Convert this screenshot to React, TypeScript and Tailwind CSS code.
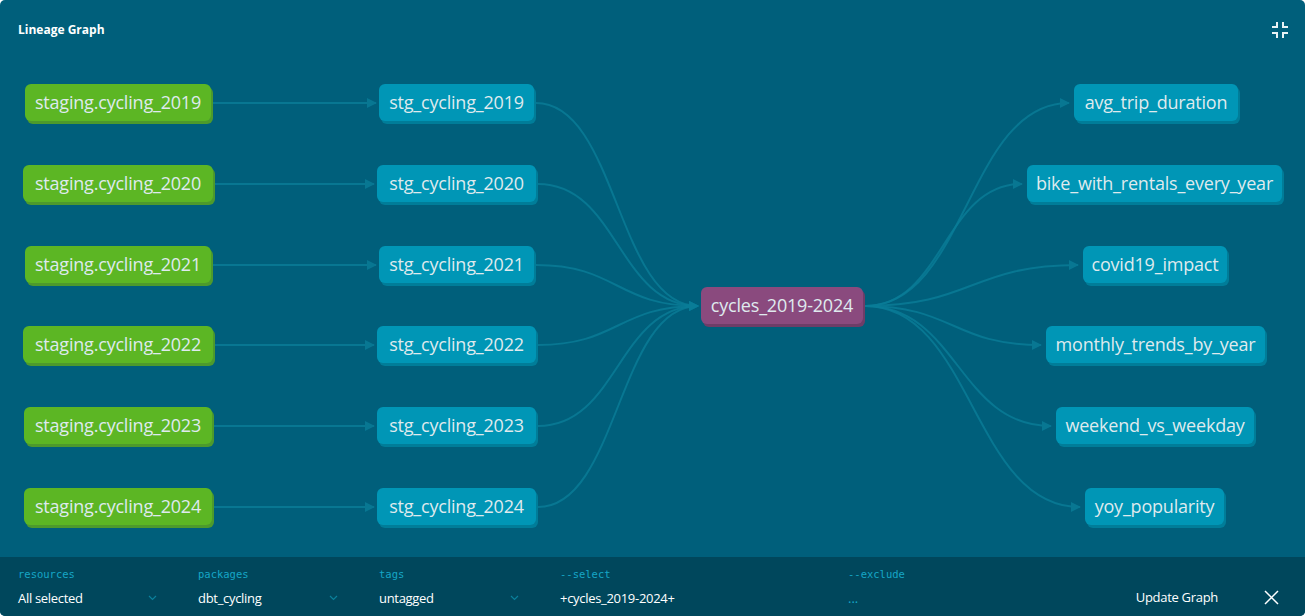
import { Fragment } from "react";

// Lineage graph panel: node positions are the content of the canvas, so the
// nodes sit absolutely inside it; the filter bar below is plain flow layout.

type Kind = "source" | "model" | "focus";
type GraphNode = { id: string; label: string; kind: Kind; x1: number; x2: number; cy: number };

const ROWS = [103, 184, 265, 345, 426, 507];
const CENTER = { x1: 701, x2: 863, cy: 306 };

const sources: GraphNode[] = [
  { x1: 25, x2: 211 },
  { x1: 23, x2: 213 },
  { x1: 25, x2: 211 },
  { x1: 23, x2: 213 },
  { x1: 24, x2: 212 },
  { x1: 24, x2: 212 },
].map((b, i) => ({
  id: `src${i}`,
  label: `staging.cycling_${2019 + i}`,
  kind: "source",
  x1: b.x1,
  x2: b.x2,
  cy: ROWS[i],
}));

const staging: GraphNode[] = [
  { x1: 379, x2: 534 },
  { x1: 377, x2: 536 },
  { x1: 379, x2: 534 },
  { x1: 377, x2: 536 },
  { x1: 377, x2: 536 },
  { x1: 377, x2: 536 },
].map((b, i) => ({
  id: `stg${i}`,
  label: `stg_cycling_${2019 + i}`,
  kind: "model",
  x1: b.x1,
  x2: b.x2,
  cy: ROWS[i],
}));

const focus: GraphNode = { id: "focus", label: "cycles_2019-2024", kind: "focus", ...CENTER };

const marts: GraphNode[] = [
  { label: "avg_trip_duration", x1: 1074, x2: 1238 },
  { label: "bike_with_rentals_every_year", x1: 1027, x2: 1282 },
  { label: "covid19_impact", x1: 1083, x2: 1227 },
  { label: "monthly_trends_by_year", x1: 1046, x2: 1265 },
  { label: "weekend_vs_weekday", x1: 1056, x2: 1254 },
  { label: "yoy_popularity", x1: 1085, x2: 1224 },
].map((m, i) => ({ id: `mart${i}`, kind: "model", cy: ROWS[i], ...m }));

const kindClass: Record<Kind, string> = {
  source: "bg-[#5cb624] shadow-[2px_3px_0_#4d9a2c]",
  model: "bg-[#0096b6] shadow-[2px_3px_0_#007d99]",
  focus: "bg-[#8a4a7e] shadow-[2px_3px_0_#6e3d68]",
};

function curve(x1: number, y1: number, x2: number, y2: number) {
  const mx = (x1 + x2) / 2;
  return `M${x1} ${y1} C${mx} ${y1}, ${mx} ${y2}, ${x2} ${y2}`;
}

function Edges() {
  const paths: string[] = [];
  sources.forEach((s, i) => paths.push(`M${s.x2 + 2} ${s.cy} L${staging[i].x1 - 3} ${staging[i].cy}`));
  staging.forEach((s) => paths.push(curve(s.x2 + 2, s.cy, focus.x1 - 3, focus.cy)));
  marts.forEach((m) => paths.push(curve(focus.x2 + 2, focus.cy, m.x1 - 5, m.cy)));
  return (
    <svg className="absolute inset-0 h-full w-full" width="1305" height="557">
      <defs>
        <marker id="arrow" viewBox="0 0 10 10" refX="9" refY="5" markerWidth="5" markerHeight="5" orient="auto">
          <path d="M0 0 L10 5 L0 10 z" fill="#0a7d98" />
        </marker>
      </defs>
      {paths.map((d, i) => (
        <path key={i} d={d} fill="none" stroke="#0a7d98" strokeWidth="2" opacity="0.8" markerEnd="url(#arrow)" />
      ))}
    </svg>
  );
}

function Node({ n }: { n: GraphNode }) {
  return (
    <div
      className={`absolute flex h-[37px] items-center justify-center rounded-[6px] font-['Open_Sans',sans-serif] text-[18px] tracking-[-0.2px] whitespace-nowrap text-[#dfeaee] ${kindClass[n.kind]}`}
      style={{ left: n.x1, width: n.x2 - n.x1, top: n.cy - 19 }}
    >
      {n.label}
    </div>
  );
}

function CollapseIcon() {
  return (
    <svg width="18" height="18" viewBox="0 0 18 18" fill="none" stroke="#e8f2f5" strokeWidth="2">
      <path d="M1 6 H6 V1" />
      <path d="M17 6 H12 V1" />
      <path d="M1 12 H6 V17" />
      <path d="M17 12 H12 V17" />
    </svg>
  );
}

function Chevron() {
  return (
    <svg width="9" height="6" viewBox="0 0 9 6" fill="none" stroke="#0b809b" strokeWidth="1.2">
      <path d="M1 1 L4.5 4.5 L8 1" />
    </svg>
  );
}

const filters = [
  { label: "resources", value: "All selected", width: "w-[180px]", chevron: true },
  { label: "packages", value: "dbt_cycling", width: "w-[181px]", chevron: true },
  { label: "tags", value: "untagged", width: "w-[181px]", chevron: true },
  { label: "--select", value: "+cycles_2019-2024+", width: "w-[288px]", chevron: false },
];

export default function App() {
  return (
    <div className="h-[616px] w-full bg-white">
      <div className="flex h-full flex-col overflow-hidden rounded-[5px] bg-[#005f7b]">
        <div className="relative flex-1">
          <div className="absolute left-[18px] top-[21px] font-['Open_Sans',sans-serif] text-[12px] font-bold text-white">
            Lineage Graph
          </div>
          <button className="absolute right-[16px] top-[21px]">
            <CollapseIcon />
          </button>
          <Edges />
          {[...sources, ...staging, focus, ...marts].map((n) => (
            <Fragment key={n.id}>
              <Node n={n} />
            </Fragment>
          ))}
        </div>

        <div className="flex h-[59px] items-stretch bg-[#00475c] pl-[18px] pr-[26px] font-['Open_Sans',sans-serif]">
          {filters.map((f) => (
            <div key={f.label} className={`${f.width} flex shrink-0 flex-col pt-[10px] pr-[41px]`}>
              <span className="font-['DejaVu_Sans_Mono',monospace] text-[10.5px] leading-[14px] text-[#16a6c6]">
                {f.label}
              </span>
              <div className="mt-[8px] flex items-center justify-between">
                <span className="text-[13px] leading-[18px] tracking-[-0.3px] text-white">{f.value}</span>
                {f.chevron && <Chevron />}
              </div>
            </div>
          ))}
          <div className="flex flex-1 flex-col pt-[10px]">
            <span className="font-['DejaVu_Sans_Mono',monospace] text-[10.5px] leading-[14px] text-[#16a6c6]">
              --exclude
            </span>
            <span className="mt-[8px] text-[13px] leading-[18px] text-[#16a6c6]">...</span>
          </div>
          <div className="flex items-end gap-[46px] pb-[10px]">
            <button className="text-[13px] leading-[18px] tracking-[-0.3px] text-white">Update Graph</button>
            <button className="pb-[1px]">
              <svg width="15" height="15" viewBox="0 0 15 15" stroke="#ffffff" strokeWidth="1.5">
                <path d="M1 1 L14 14 M14 1 L1 14" />
              </svg>
            </button>
          </div>
        </div>
      </div>
    </div>
  );
}
